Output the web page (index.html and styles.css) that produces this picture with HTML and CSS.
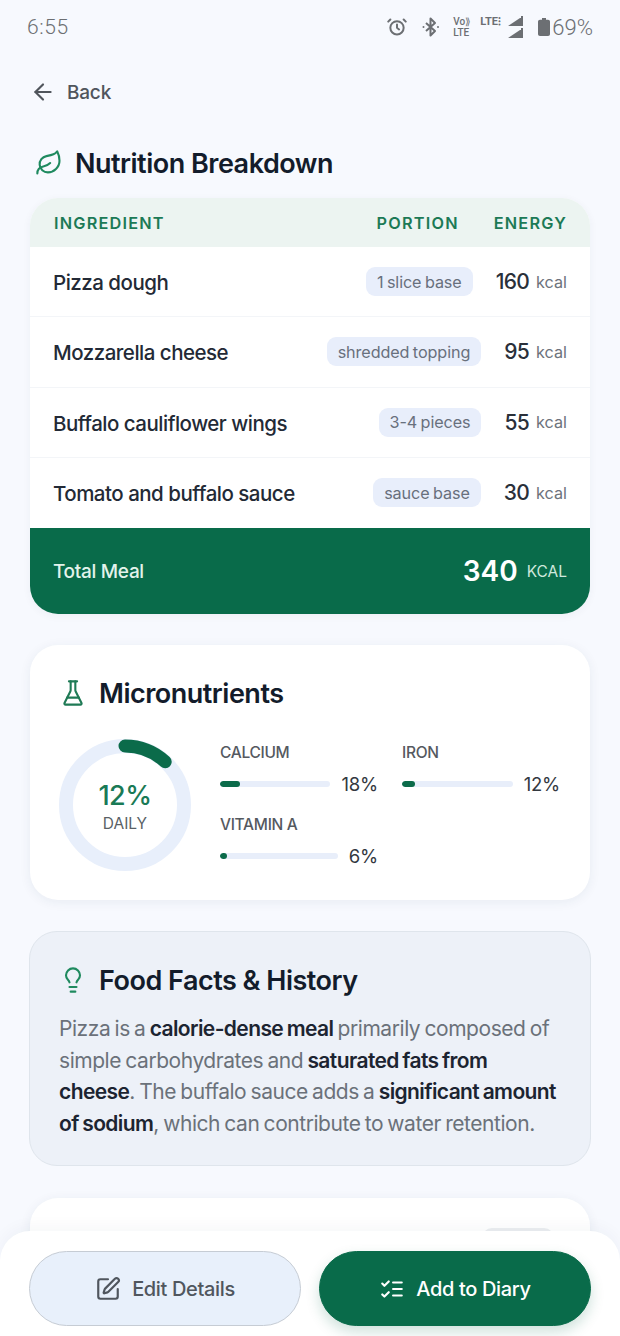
FILE: index.html
```html
<!DOCTYPE html>
<html>
<head>
    <meta charset="UTF-8">
    <title>Nutrition Breakdown</title>
    <link rel="stylesheet" href="styles.css">
</head>
<body>
    <!-- status bar -->
    <div class="status">
        <span class="time">6:55</span>
        <div class="status-icons">
            <svg class="st-icon" width="20" height="20" viewBox="0 0 24 24" fill="none" stroke="#6c6f73" stroke-width="2.4" stroke-linecap="round" stroke-linejoin="round"><circle cx="12" cy="13" r="8"/><path d="M12 9v4l2.5 2"/><path d="M4 3 1.5 5.5"/><path d="M20 3l2.5 2.5"/></svg>
            <svg class="st-bt" width="20" height="22" viewBox="0 0 20 22" fill="none" stroke="#6c6f73" stroke-width="2" stroke-linejoin="round"><path d="M5 7l9 8-4.500 4.500V2.500L14 7l-9 8"/><circle cx="2.500" cy="11" r="1" fill="#6c6f73" stroke="none"/><circle cx="17" cy="11" r="1" fill="#6c6f73" stroke="none"/></svg>
            <div class="st-volte"><span>Vo⟫</span><span>LTE</span></div>
            <div class="st-signal">
                <span class="st-lte">LTE⁝</span>
                <div class="st-bars">
                    <svg width="16" height="10" viewBox="0 0 16 10"><path d="M0 10 12 2h1V0h2v10z" fill="#6c6f73"/></svg>
                    <svg width="16" height="10" viewBox="0 0 16 10"><path d="M0 10 12 2h1V0h2v10z" fill="#6c6f73"/></svg>
                </div>
            </div>
            <svg class="st-batt" width="12" height="18" viewBox="0 0 12 20" preserveAspectRatio="none"><path d="M4 0h4v2h2a2 2 0 0 1 2 2v14a2 2 0 0 1-2 2H2a2 2 0 0 1-2-2V4a2 2 0 0 1 2-2h2z" fill="#6c6f73"/></svg>
            <span class="st-pct">69%</span>
        </div>
    </div>

    <div class="back">
        <svg width="26" height="26" viewBox="0 0 24 24" fill="none" stroke="#50555c" stroke-width="2" stroke-linecap="round" stroke-linejoin="round"><path d="m12 19-7-7 7-7"/><path d="M19 12H5"/></svg>
        <span>Back</span>
    </div>

    <h1 class="page-title">
        <svg width="28" height="28" viewBox="0 0 24 24" fill="none" stroke="#1f8a5f" stroke-width="1.8" stroke-linecap="round" stroke-linejoin="round"><path d="M11 20A7 7 0 0 1 9.800 6.100C15.500 5 17 4.480 19 2c1 2 2 4.180 2 8 0 5.500-4.780 10-10 10Z"/><path d="M2 21c0-3 1.850-5.360 5.080-6C9.500 14.520 12 13 13 12"/></svg>
        Nutrition Breakdown
    </h1>

    <!-- ingredients table -->
    <div class="table">
        <div class="table-head">
            <span class="head-name">INGREDIENT</span>
            <span class="head-portion">PORTION</span>
            <span>ENERGY</span>
        </div>
        <div class="row">
            <span class="name">Pizza dough</span>
            <span class="pill">1 slice base</span>
            <span class="energy"><b>160</b><i>kcal</i></span>
        </div>
        <div class="row">
            <span class="name">Mozzarella cheese</span>
            <span class="pill">shredded topping</span>
            <span class="energy"><b>95</b><i>kcal</i></span>
        </div>
        <div class="row">
            <span class="name">Buffalo cauliflower wings</span>
            <span class="pill">3-4 pieces</span>
            <span class="energy"><b>55</b><i>kcal</i></span>
        </div>
        <div class="row">
            <span class="name">Tomato and buffalo sauce</span>
            <span class="pill">sauce base</span>
            <span class="energy"><b>30</b><i>kcal</i></span>
        </div>
        <div class="total">
            <span class="total-label">Total Meal</span>
            <span class="total-num">340</span>
            <span class="total-unit">KCAL</span>
        </div>
    </div>

    <!-- micronutrients -->
    <div class="card micro">
        <h2 class="card-title">
            <svg width="28" height="28" viewBox="0 0 24 24" fill="none" stroke="#1f7a55" stroke-width="1.800" stroke-linecap="round" stroke-linejoin="round"><path d="M10 2v7.527a2 2 0 0 1-.211.896L4.720 20.550a1 1 0 0 0 .9 1.450h12.760a1 1 0 0 0 .9-1.450l-5.069-10.127A2 2 0 0 1 14 9.527V2"/><path d="M8.500 2h7"/><path d="M7 16h10"/></svg>
            Micronutrients
        </h2>
        <div class="micro-body">
            <div class="ring">
                <svg width="132" height="132" viewBox="0 0 132 132" fill="none">
                    <circle cx="66" cy="66" r="59" stroke="#e8effb" stroke-width="14"/>
                    <path d="M66 7A59 59 0 0 1 106.200 22.800" stroke="#0b6b4a" stroke-width="13" stroke-linecap="round"/>
                </svg>
                <div class="ring-text">
                    <span class="ring-num">12%</span>
                    <span class="ring-label">DAILY</span>
                </div>
            </div>
            <div class="nutrients">
                <div class="nutrient">
                    <span class="nutrient-name">CALCIUM</span>
                    <div class="nutrient-line">
                        <div class="bar"><div class="bar-fill" style="width:18%"></div></div>
                        <span class="nutrient-val">18%</span>
                    </div>
                </div>
                <div class="nutrient">
                    <span class="nutrient-name">IRON</span>
                    <div class="nutrient-line">
                        <div class="bar"><div class="bar-fill" style="width:12%"></div></div>
                        <span class="nutrient-val">12%</span>
                    </div>
                </div>
                <div class="nutrient">
                    <span class="nutrient-name">VITAMIN A</span>
                    <div class="nutrient-line">
                        <div class="bar"><div class="bar-fill" style="width:6%"></div></div>
                        <span class="nutrient-val">6%</span>
                    </div>
                </div>
            </div>
        </div>
    </div>

    <!-- facts -->
    <div class="facts">
        <h2 class="card-title">
            <svg width="28" height="28" viewBox="0 0 24 24" fill="none" stroke="#1f8a5f" stroke-width="1.800" stroke-linecap="round" stroke-linejoin="round"><path d="M15 14c.2-1 .7-1.700 1.500-2.500 1-.9 1.500-2.200 1.500-3.500A6 6 0 0 0 6 8c0 1 .2 2.200 1.500 3.500.7.7 1.300 1.500 1.500 2.500"/><path d="M9 18h6"/><path d="M10 22h4"/></svg>
            Food Facts &amp; History
        </h2>
        <p class="facts-text">Pizza is a <b>calorie-dense meal</b> primarily composed of<br>simple carbohydrates and <b>saturated fats from<br>cheese</b>. The buffalo sauce adds a <b>significant amount<br>of sodium</b>, which can contribute to water retention.</p>
    </div>

    <!-- next card, mostly hidden by the bottom bar -->
    <div class="card peek">
        <div class="peek-pill"></div>
    </div>

    <div class="bottom-bar">
        <button type="button" class="btn btn-edit">
            <svg width="26" height="26" viewBox="0 0 24 24" fill="none" stroke="#50565e" stroke-width="2" stroke-linecap="round" stroke-linejoin="round"><path d="M12 3H5a2 2 0 0 0-2 2v14a2 2 0 0 0 2 2h14a2 2 0 0 0 2-2v-7"/><path d="M18.375 2.625a1 1 0 0 1 3 3l-9.013 9.014a2 2 0 0 1-.853.505l-2.873.84a.5.5 0 0 1-.62-.62l.84-2.873a2 2 0 0 1 .506-.852z"/></svg>
            Edit Details
        </button>
        <button type="button" class="btn btn-add">
            <svg width="26" height="26" viewBox="0 0 24 24" fill="none" stroke="#ffffff" stroke-width="2" stroke-linecap="round" stroke-linejoin="round"><path d="m3 17 2 2 4-4"/><path d="m3 7 2 2 4-4"/><path d="M13 6h8"/><path d="M13 12h8"/><path d="M13 18h8"/></svg>
            Add to Diary
        </button>
    </div>
</body>
</html>
```

FILE: styles.css
```css
body {
    margin: 0;
    height: 1336px;
    overflow: hidden;
    position: relative;
    background-color: #f7f9fe;
    font-family: "Inter", "Noto Sans", sans-serif;
    color: #1a2230;
}

/* status bar */
.status {
    height: 54px;
    padding: 0 27px;
    display: flex;
    align-items: center;
    justify-content: space-between;
    color: #6c6f73;
}
.time {
    font-family: "Roboto", sans-serif;
    font-size: 21px;
    font-weight: 300;
    letter-spacing: 0.6px;
}
.status-icons {
    display: flex;
    align-items: center;
}
.st-bt {
    margin-left: 14px;
}
.st-volte {
    margin-left: 12px;
    width: 22px;
    display: flex;
    flex-direction: column;
    font-family: "Roboto", sans-serif;
    font-size: 10px;
    font-weight: 500;
    line-height: 11px;
}
.st-signal {
    margin-left: 5px;
    display: flex;
}
.st-lte {
    font-family: "Roboto", sans-serif;
    font-size: 11px;
    font-weight: 700;
    line-height: 12px;
    width: 28px;
}
.st-bars {
    display: flex;
    flex-direction: column;
    gap: 2px;
}
.st-batt {
    margin-left: 14px;
}
.st-pct {
    margin-left: 2px;
    font-family: "Roboto", sans-serif;
    font-size: 22px;
    font-weight: 300;
}

.back {
    margin: 24px 0 0 30px;
    height: 28px;
    display: flex;
    align-items: center;
    gap: 11px;
    font-size: 19px;
    font-weight: 500;
    letter-spacing: -0.2px;
    color: #50555c;
}

.page-title {
    margin: 39px 0 0 35px;
    height: 36px;
    display: flex;
    align-items: center;
    gap: 12px;
    font-size: 27px;
    font-weight: 600;
    letter-spacing: -0.5px;
    color: #131c2b;
}

/* table */
.table {
    margin: 17px 30px 0;
    border-radius: 28px;
    overflow: hidden;
    background-color: #ffffff;
    box-shadow: 0 2px 8px rgba(30, 50, 80, 0.05);
}
.table-head {
    height: 49px;
    padding: 0 23px 0 24px;
    display: flex;
    align-items: center;
    background-color: #ecf4f1;
    color: #1c7a56;
    font-size: 16.3px;
    font-weight: 600;
    letter-spacing: 1.2px;
}
.head-name {
    flex: 1;
}
.head-portion {
    margin-right: 35px;
}
.row {
    box-sizing: border-box;
    height: 70.25px;
    padding: 0 23px;
    display: flex;
    align-items: center;
    gap: 23px;
    border-bottom: 1px solid #f3f5f8;
}
.row:nth-child(5) {
    border-bottom: none;
}
.name {
    flex: 1;
    font-size: 20.5px;
    font-weight: 500;
    letter-spacing: -0.5px;
    color: #232a36;
    position: relative;
    top: 1px;
}
.pill {
    height: 29px;
    padding: 0 11px;
    display: flex;
    align-items: center;
    border-radius: 9px;
    background-color: #e8eefb;
    color: #68707d;
    font-size: 16.2px;
    letter-spacing: -0.1px;
    word-spacing: -1px;
}
.energy {
    display: flex;
    align-items: center;
    gap: 7px;
}
.energy b {
    font-size: 21px;
    font-weight: 500;
    letter-spacing: -0.7px;
    color: #2a303a;
}
.energy i {
    font-style: normal;
    font-size: 16.2px;
    color: #6d737c;
}
.total {
    height: 86px;
    padding: 0 23px;
    display: flex;
    align-items: center;
    background-color: #096b4a;
    color: #ffffff;
}
.total-label {
    flex: 1;
    font-size: 19px;
    font-weight: 500;
    letter-spacing: -0.3px;
    color: #e3f3ec;
}
.total-num {
    font-size: 28px;
    font-weight: 600;
}
.total-unit {
    margin-left: 9px;
    font-size: 15.5px;
    color: #cfe8dd;
}

/* cards */
.card {
    background-color: #ffffff;
    border-radius: 28px;
    box-shadow: 0 2px 12px rgba(30, 50, 80, 0.07);
}
.micro {
    margin: 31px 30px 0;
    height: 255px;
    padding: 30px 28px 0 29px;
    box-sizing: border-box;
}
.card-title {
    margin: 0;
    height: 36px;
    display: flex;
    align-items: center;
    gap: 12px;
    font-size: 27px;
    font-weight: 600;
    letter-spacing: -0.5px;
    color: #131c2b;
}
.micro-body {
    margin-top: 28px;
    display: flex;
}
.ring {
    width: 132px;
    height: 132px;
    position: relative;
    flex: none;
}
.ring-text {
    position: absolute;
    inset: 0;
    padding-top: 4px;
    display: flex;
    flex-direction: column;
    gap: 2px;
    align-items: center;
    justify-content: center;
}
.ring-num {
    font-size: 27px;
    font-weight: 500;
    line-height: 32px;
    color: #1a7a56;
    letter-spacing: -0.5px;
}
.ring-label {
    font-size: 15.5px;
    line-height: 20px;
    color: #5a5f66;
}
.nutrients {
    margin-left: 29px;
    width: 341px;
    display: grid;
    grid-template-columns: 158px 158px;
    column-gap: 24px;
    row-gap: 14px;
    align-content: start;
}
.nutrient-name {
    display: block;
    font-size: 15.5px;
    font-weight: 500;
    line-height: 20px;
    letter-spacing: -0.3px;
    color: #55595f;
    margin-top: 4px;
}
.nutrient-line {
    margin-top: 8px;
    height: 26px;
    display: flex;
    align-items: center;
    gap: 11px;
}
.bar {
    flex: 1;
    height: 6px;
    border-radius: 3px;
    background-color: #e8eefa;
    overflow: hidden;
}
.bar-fill {
    height: 100%;
    border-radius: 3px;
    background-color: #0b6b4a;
}
.nutrient-val {
    font-size: 18.5px;
    color: #33383f;
    letter-spacing: -0.2px;
}

/* facts */
.facts {
    margin: 31px 29px 0;
    height: 235px;
    padding: 30px 29px 0;
    box-sizing: border-box;
    border: 1px solid #dfe5ec;
    border-radius: 28px;
    background-color: #edf1f8;
}
.facts-text {
    margin: 15px 0 0;
    font-size: 21px;
    line-height: 31.6px;
    letter-spacing: -0.45px;
    word-spacing: -1.2px;
    color: #6b717a;
    white-space: nowrap;
}
.facts-text b {
    font-weight: 600;
    letter-spacing: -0.6px;
    color: #1c2431;
}

.peek {
    margin: 32px 30px 0;
    height: 200px;
    position: relative;
}
.peek-pill {
    position: absolute;
    top: 30px;
    right: 36px;
    width: 72px;
    height: 30px;
    border-radius: 10px;
    background-color: #eceef1;
}

/* bottom bar sits over the scrolling content */
.bottom-bar {
    position: absolute;
    left: 0;
    right: 0;
    bottom: 0;
    height: 105px;
    padding: 20px 29px 0;
    box-sizing: border-box;
    display: flex;
    gap: 18px;
    border-radius: 30px 30px 0 0;
    background-color: #ffffff;
    box-shadow: 0 -4px 16px rgba(30, 50, 80, 0.04);
}
.btn {
    flex: 1;
    height: 75px;
    padding: 0;
    display: flex;
    align-items: center;
    justify-content: center;
    gap: 11px;
    border-radius: 38px;
    font-family: "Inter", "Noto Sans", sans-serif;
    font-size: 20px;
    font-weight: 500;
    letter-spacing: -0.35px;
}
.btn-edit {
    background-color: #e8f0fb;
    border: 1px solid #c6ccd4;
    color: #50565e;
}
.btn-add {
    background-color: #096b4a;
    border: 1px solid #096b4a;
    color: #ffffff;
    box-shadow: 0 6px 14px rgba(9, 107, 74, 0.2);
}
```
